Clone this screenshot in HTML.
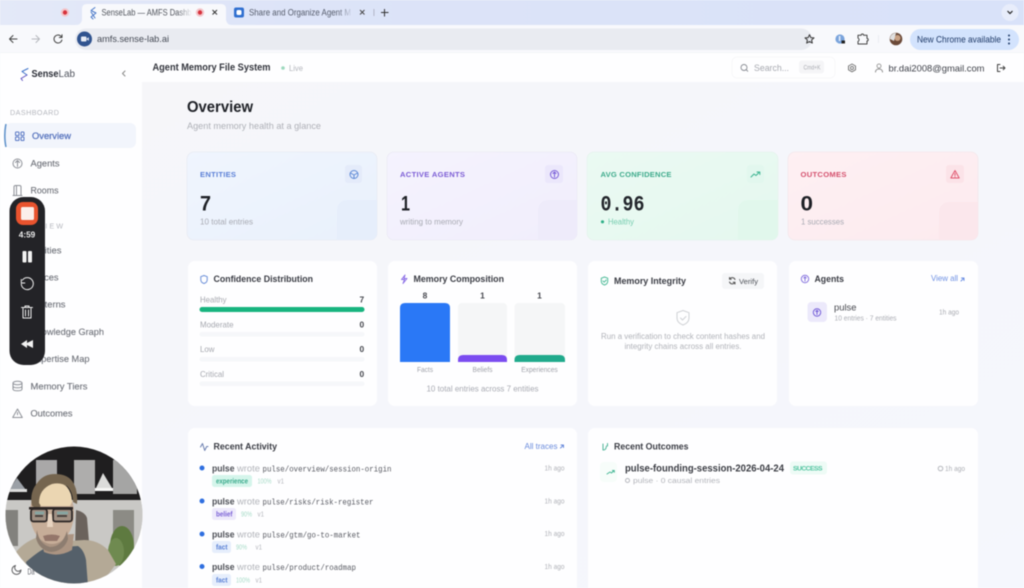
<!DOCTYPE html>
<html><head><meta charset="utf-8"><title>SenseLab — AMFS Dashboard</title>
<style>
html,body{margin:0;padding:0;width:1024px;height:588px;overflow:hidden;background:#f7f8fc}
svg{display:block;filter:blur(.45px);font-family:"Liberation Sans",sans-serif}
.m{font-family:"Liberation Mono",monospace}
.b{font-weight:700}
.i{fill:none;stroke-width:1;stroke-linecap:round;stroke-linejoin:round}
</style></head><body>
<svg width="1024" height="588" viewBox="0 0 1024 588" xmlns="http://www.w3.org/2000/svg">
<defs>
<linearGradient id="strip" x1="0" x2="1" y1="0" y2="0"><stop offset="0" stop-color="#e4e9f8"/><stop offset=".3" stop-color="#dde4f8"/><stop offset="1" stop-color="#d9e2f9"/></linearGradient>
<linearGradient id="main" x1="0" x2="1" y1="0" y2="1"><stop offset="0" stop-color="#f6f6f9"/><stop offset="1" stop-color="#f5f7fd"/></linearGradient>
<linearGradient id="c1" x1="0" x2="1" y1="0" y2="1"><stop offset="0" stop-color="#f0f5fe"/><stop offset="1" stop-color="#e9f1fc"/></linearGradient>
<linearGradient id="c2" x1="0" x2="1" y1="0" y2="1"><stop offset="0" stop-color="#f5f3fe"/><stop offset="1" stop-color="#f1eefc"/></linearGradient>
<linearGradient id="c3" x1="0" x2="1" y1="0" y2="1"><stop offset="0" stop-color="#ebfaf3"/><stop offset="1" stop-color="#e5f8ef"/></linearGradient>
<linearGradient id="c4" x1="0" x2="1" y1="0" y2="1"><stop offset="0" stop-color="#fef0f3"/><stop offset="1" stop-color="#fdebef"/></linearGradient>
<linearGradient id="fade" x1="0" x2="1"><stop offset="0" stop-color="#dde4f8" stop-opacity="0"/><stop offset="1" stop-color="#dde4f8"/></linearGradient>
<linearGradient id="fade2" x1="0" x2="1"><stop offset="0" stop-color="#f8f9fc" stop-opacity="0"/><stop offset="1" stop-color="#f8f9fc"/></linearGradient>
<clipPath id="cam"><circle cx="74" cy="515" r="68.5"/></clipPath>
<clipPath id="c1c"><rect x="187" y="152" width="190" height="88" rx="7"/></clipPath>
<clipPath id="c2c"><rect x="387" y="152" width="190" height="88" rx="7"/></clipPath>
<clipPath id="c3c"><rect x="587" y="152" width="191" height="88" rx="7"/></clipPath>
<clipPath id="c4c"><rect x="788" y="152" width="190" height="88" rx="7"/></clipPath>
</defs>

<!-- page backgrounds -->
<rect width="1024" height="588" fill="url(#main)"/>
<!-- tab strip -->
<rect width="1024" height="25" fill="url(#strip)"/>
<circle cx="65" cy="12.5" r="4.2" fill="#f3c6cb"/><circle cx="65" cy="12.5" r="2.2" fill="#d6323c"/>
<path d="M76 25q5 0 6-5V9q0-5 5-5h134q5 0 5 5v11q1 5 6 5z" fill="#f8f9fc"/>
<path class="i" d="M95 7.5l-4 3 5 2.500-5 4 2 2 M91 12l4 6" stroke="#4a78c8" stroke-width="1.800"/>
<text x="101.500" y="15.500" font-size="8.800" fill="#50545c" textLength="90" lengthAdjust="spacingAndGlyphs">SenseLab — AMFS Dashb</text>
<rect x="178" y="6" width="14" height="13" fill="url(#fade2)"/>
<circle cx="200" cy="12.500" r="4.200" fill="#f3c6cb"/><circle cx="200" cy="12.500" r="2.200" fill="#d6323c"/>
<path d="M212.500 10l4.500 4.500M217 10l-4.500 4.500" stroke="#333" stroke-width="1"/>
<rect x="234" y="7.500" width="10" height="10" rx="2" fill="#2f6fd0"/><rect x="236.500" y="10" width="5" height="5" rx="1.500" fill="#fff"/>
<text x="249" y="15.500" font-size="8.800" fill="#555b6b" textLength="102" lengthAdjust="spacingAndGlyphs">Share and Organize Agent M</text>
<rect x="338" y="6" width="15" height="13" fill="url(#fade)"/>
<path d="M360 10l4.500 4.500M364.500 10l-4.500 4.500" stroke="#444" stroke-width=".9"/>
<rect x="373.500" y="9" width=".8" height="7" fill="#aab"/>
<path d="M384.500 9v7.500M381 12.500h7.500" stroke="#333" stroke-width="1"/>
<circle cx="1010" cy="12.500" r="8.500" fill="#e8edfb"/><path d="M1007.500 11l2.500 2.500 2.500-2.500" fill="none" stroke="#222" stroke-width="1.200"/>

<!-- toolbar -->
<rect y="25" width="1024" height="28" fill="#f8f9fc"/>
<rect y="52.700" width="1024" height=".6" fill="#e9ebf1"/>
<path class="i" stroke="#444" d="M17 39h-7.500M13 35.500L9.500 39l3.500 3.500" stroke-width="1.100"/>
<path class="i" stroke="#b6b8be" d="M32 39h7.500M36 35.500l3.500 3.500-3.500 3.500" stroke-width="1.100"/>
<path class="i" stroke="#444" d="M61.500 37a4 4 0 1 0 .4 3M62 34.800V37.500h-2.700" stroke-width="1.100"/>
<rect x="75" y="28.500" width="737" height="21.500" rx="10.750" fill="#e9ebf1"/>
<circle cx="84.500" cy="39" r="7.500" fill="#30538f"/><rect x="81" y="36.500" width="5.500" height="5" rx="1" fill="#e8ecf5"/><path d="M86.800 38.500l2-1.200v3.400l-2-1.200z" fill="#e8ecf5"/>
<text x="97" y="42" font-size="9.300" fill="#454a55" textLength="72" lengthAdjust="spacingAndGlyphs">amfs.sense-lab.ai</text>
<path class="i" stroke="#333" stroke-width="1" d="M809.500 34.700l1.300 2.900 3.200.3-2.400 2.100.7 3.100-2.800-1.600-2.800 1.600.7-3.100-2.400-2.100 3.200-.3z"/>
<circle cx="840" cy="39" r="4.600" fill="#7aa4dc"/><rect x="838.800" y="36" width="1.600" height="5" fill="#e6eefa"/><rect x="841.500" y="40.500" width="3.500" height="3" fill="#222"/>
<path class="i" stroke="#444" stroke-width="1.100" d="M858 35.200h3.200a1.200 1.200 0 0 1 2.400 0H867v3.300a1.200 1.200 0 0 1 0 2.400V44h-9v-2.600a1.800 1.800 0 0 0 0-3.300z"/>
<rect x="878" y="35" width=".8" height="8" fill="#e8eaf0"/>
<circle cx="896" cy="39" r="6.300" fill="#6b4a38"/><circle cx="897.500" cy="38" r="3" fill="#c8a184"/><path d="M890 39a6 6 0 0 1 6-6l-2 8z" fill="#e0e0e0"/>
<rect x="910" y="29" width="109" height="21" rx="10.500" fill="#d3e3fd"/>
<text x="917" y="42.500" font-size="9" fill="#1f3a68" textLength="84" lengthAdjust="spacingAndGlyphs">New Chrome available</text>
<circle cx="1009" cy="35.500" r="1" fill="#1f3a68"/><circle cx="1009" cy="39.500" r="1" fill="#1f3a68"/><circle cx="1009" cy="43.500" r="1" fill="#1f3a68"/>

<!-- sidebar + header -->
<rect y="53" width="142" height="535" fill="#fefeff"/>
<rect y="53" width="1024" height="29" fill="#fefeff"/>
<path class="i" stroke="#3f74c9" stroke-width="2.400" d="M28 68.500l-6 3 5 3.500"/>
<path class="i" stroke="#5c4fbe" stroke-width="2.400" d="M27 75l-6 3.500 1.500 2"/>
<text x="31.500" y="77" font-size="10" class="b" fill="#2a2d36" textLength="27" lengthAdjust="spacingAndGlyphs">Sense</text>
<text x="58.500" y="77" font-size="10" fill="#50545e" textLength="16.500" lengthAdjust="spacingAndGlyphs">Lab</text>
<path class="i" stroke="#888" d="M125 71l-2.500 2.500 2.500 2.500" stroke-width="1"/>
<text x="152.500" y="70.500" font-size="10" class="b" fill="#33353d" textLength="118" lengthAdjust="spacingAndGlyphs">Agent Memory File System</text>
<circle cx="283" cy="68" r="1.800" fill="#9ed9be"/>
<text x="289" y="71" font-size="8" fill="#b4b6bd" textLength="14" lengthAdjust="spacingAndGlyphs">Live</text>
<rect x="732" y="57" width="103" height="21" rx="5" fill="#fefeff" stroke="#f6f6f8" stroke-width=".8"/>
<circle cx="744" cy="67.500" r="3" fill="none" stroke="#8a8d94" stroke-width=".9"/><path d="M746.200 69.700l1.800 1.800" stroke="#8a8d94" stroke-width=".9"/>
<text x="754" y="71" font-size="9" fill="#a7a9b0" textLength="35" lengthAdjust="spacingAndGlyphs">Search...</text>
<rect x="799" y="60.500" width="25" height="13" rx="3" fill="#f5f5f7"/>
<text x="803.500" y="69.500" font-size="6.300" fill="#a9abb1" textLength="17" lengthAdjust="spacingAndGlyphs">Cmd+K</text>
<path class="i" stroke="#777" stroke-width=".9" d="M852 64l3.500 2v3.800l-3.500 2-3.500-2V66z"/><circle cx="852" cy="68" r="1.500" fill="none" stroke="#777" stroke-width=".9"/>
<circle cx="879" cy="66" r="2" fill="none" stroke="#888" stroke-width=".8"/><path class="i" stroke="#888" stroke-width=".8" d="M875.500 72c0-4 7-4 7 0"/>
<text x="888.500" y="71.300" font-size="9.400" fill="#3e4149" textLength="96" lengthAdjust="spacingAndGlyphs">br.dai2008@gmail.com</text>
<path class="i" stroke="#444" stroke-width=".9" d="M1000 64.500h-2.500v7h2.500M1000 68h5M1003.200 66.300l1.800 1.700-1.800 1.700"/>

<!-- sidebar nav -->
<text x="10" y="115" font-size="7.200" fill="#b5b7be" textLength="49" lengthAdjust="spacing">DASHBOARD</text>
<rect x="5" y="123" width="131" height="25" rx="6" fill="#f2f5fc"/>
<path d="M6 124q-1.200 5-1.200 11.500T6 147" fill="none" stroke="#5b8fc9" stroke-width="1.500"/>
<g class="i" stroke="#5a78c4" stroke-width="1"><rect x="15.500" y="132" width="3.500" height="3.500" rx=".8"/><rect x="21" y="132" width="3" height="3.500" rx=".8"/><rect x="15.500" y="137" width="3.500" height="3.500" rx=".8"/><rect x="21" y="137" width="3" height="3.500" rx=".8"/></g>
<text x="32" y="139" font-size="9.600" fill="#5572bd" textLength="39" lengthAdjust="spacingAndGlyphs" stroke="#5572bd" stroke-width=".25">Overview</text>
<g fill="#6f727a" font-size="9.600" stroke="#6f727a" stroke-width=".12">
<text x="30.500" y="166.500" textLength="29" lengthAdjust="spacingAndGlyphs">Agents</text>
<text x="30.500" y="193.500" textLength="28" lengthAdjust="spacingAndGlyphs">Rooms</text>
<text x="30.500" y="253.500" textLength="31" lengthAdjust="spacingAndGlyphs">Entities</text>
<text x="30.500" y="280.500" textLength="28" lengthAdjust="spacingAndGlyphs">Traces</text>
<text x="30.500" y="307.500" textLength="35" lengthAdjust="spacingAndGlyphs">Patterns</text>
<text x="30.500" y="335" textLength="73.500" lengthAdjust="spacingAndGlyphs">Knowledge Graph</text>
<text x="30.500" y="362" textLength="59" lengthAdjust="spacingAndGlyphs">Expertise Map</text>
<text x="30.500" y="389.500" textLength="57" lengthAdjust="spacingAndGlyphs">Memory Tiers</text>
<text x="30.500" y="416.500" textLength="42" lengthAdjust="spacingAndGlyphs">Outcomes</text>
</g>
<text x="10" y="228.500" font-size="7.200" fill="#b5b7be" textLength="53" lengthAdjust="spacing">OVERVIEW</text>
<g class="i" stroke="#8e9198" stroke-width=".9">
<circle cx="17.500" cy="163.500" r="4.500"/><path d="M17.500 160.500v6M15.500 162.500l2-2 2 2"/>
<path d="M14 195.500v-8.500q0-1.500 1.500-1.500h4q1.500 0 1.500 1.500v8.500M13 195.500h9M16.500 186v9"/>
<ellipse cx="17.500" cy="383" rx="4.500" ry="1.800"/><path d="M13 383v6c0 2.400 9 2.400 9 0v-6M13 386c0 2.400 9 2.400 9 0"/>
<path d="M17.500 409l-4.800 8.500h9.600zM17.500 412.500v2.200"/>
</g>

<!-- page title -->
<text x="187" y="112" font-size="15.500" class="b" fill="#1e2026" textLength="66" lengthAdjust="spacingAndGlyphs">Overview</text>
<text x="187" y="129" font-size="9.500" fill="#aeb0b7" textLength="134" lengthAdjust="spacingAndGlyphs">Agent memory health at a glance</text>

<!-- stat cards -->
<rect x="187" y="152" width="190" height="88" rx="7" fill="url(#c1)" stroke="#e8ebf3" stroke-width=".8"/>
<g clip-path="url(#c1c)"><rect x="337" y="200" width="50" height="50" rx="10" fill="#e6eefb"/></g>
<rect x="387" y="152" width="190" height="88" rx="7" fill="url(#c2)" stroke="#ebeaf5" stroke-width=".8"/>
<g clip-path="url(#c2c)"><rect x="538" y="200" width="50" height="50" rx="10" fill="#eeebfa"/></g>
<rect x="587" y="152" width="191" height="88" rx="7" fill="url(#c3)" stroke="#e6f3ee" stroke-width=".8"/>
<g clip-path="url(#c3c)"><rect x="738" y="200" width="50" height="50" rx="10" fill="#e1f7ec"/></g>
<rect x="788" y="152" width="190" height="88" rx="7" fill="url(#c4)" stroke="#f3e8ec" stroke-width=".8"/>
<g clip-path="url(#c4c)"><rect x="939" y="202" width="50" height="50" rx="10" fill="#fbe7ec"/></g>

<rect x="345" y="165" width="17" height="18" rx="3" fill="#e4ebfa"/>
<rect x="545" y="165" width="18" height="18" rx="3" fill="#ebe7fb"/>
<rect x="747" y="165" width="17" height="18" rx="3" fill="#e2f7ee"/>
<rect x="946" y="165" width="18" height="18" rx="3" fill="#fbe3e8"/>
<circle cx="354" cy="174.500" r="4" class="i" stroke="#5d8ad6"/><path class="i" stroke="#5d8ad6" d="M350.500 173l3.500 2 3.500-2M354 175v3"/>
<circle cx="554.500" cy="174.500" r="4" class="i" stroke="#7a5fd8" stroke-width="1.100"/><path class="i" stroke="#7a5fd8" d="M554.500 172v5M553 173.500l1.500-1.500 1.500 1.500"/>
<path class="i" stroke="#3fb592" d="M751 177l3-3 2 1.500 3.500-3.500M757 172h2.800v2.500"/>
<path class="i" stroke="#e0566f" stroke-width="1.100" d="M955 170.500l-4.200 7.500h8.400zM955 173.500v2M955 176.800v.1"/>

<g font-size="7.600" class="b">
<text x="200" y="177" fill="#5a7fd6" textLength="36" lengthAdjust="spacing">ENTITIES</text>
<text x="400" y="177" fill="#7a5bd4" textLength="65" lengthAdjust="spacing">ACTIVE AGENTS</text>
<text x="600.500" y="177" fill="#3daa8b" textLength="71" lengthAdjust="spacing">AVG CONFIDENCE</text>
<text x="800.500" y="177" fill="#d4506d" textLength="46" lengthAdjust="spacing">OUTCOMES</text>
</g>
<g font-size="21" class="b" fill="#1e2026">
<text x="200" y="210.500" textLength="11" lengthAdjust="spacingAndGlyphs">7</text>
<text x="401" y="210.500" textLength="9" lengthAdjust="spacingAndGlyphs">1</text>
<text x="800.500" y="210.500" textLength="12.500" lengthAdjust="spacingAndGlyphs">0</text>
</g>
<text class="m b" x="600.500" y="210.500" font-size="22" fill="#22252b" textLength="44" lengthAdjust="spacingAndGlyphs">0.96</text>
<g font-size="8" fill="#a8aab3">
<text x="200" y="224.500" textLength="53" lengthAdjust="spacingAndGlyphs">10 total entries</text>
<text x="400" y="224.500" textLength="63" lengthAdjust="spacingAndGlyphs">writing to memory</text>
<text x="801" y="224.500" textLength="43" lengthAdjust="spacingAndGlyphs">1 successes</text>
</g>
<circle cx="602.500" cy="221.800" r="1.600" fill="#2fb088"/>
<text x="608" y="224.500" font-size="8" fill="#76cdb0" textLength="26" lengthAdjust="spacingAndGlyphs">Healthy</text>

<!-- row 2 cards -->
<g fill="#fefeff">
<rect x="188" y="261" width="189" height="145" rx="7"/>
<rect x="388" y="261" width="189" height="145" rx="7"/>
<rect x="588" y="261" width="189" height="145" rx="7"/>
<rect x="789" y="261" width="189" height="145" rx="7"/>
<rect x="188" y="428" width="389" height="170" rx="7"/>
<rect x="588" y="428" width="390" height="170" rx="7"/>
</g>

<!-- Confidence Distribution -->
<path class="i" stroke="#6b8fd8" d="M204 275.500l3.200 1.200v3c0 2-1.500 3.200-3.200 3.800-1.700-.6-3.200-1.800-3.200-3.800v-3z"/>
<text x="213.500" y="282" font-size="9.200" class="b" fill="#3a3c44" textLength="99.500" lengthAdjust="spacingAndGlyphs">Confidence Distribution</text>
<g font-size="8.400" fill="#a6a8af">
<text x="200" y="302.500" textLength="26.500" lengthAdjust="spacingAndGlyphs">Healthy</text>
<text x="200" y="327.500" textLength="33.500" lengthAdjust="spacingAndGlyphs">Moderate</text>
<text x="200" y="352" textLength="14.500" lengthAdjust="spacingAndGlyphs">Low</text>
<text x="200" y="377" textLength="24" lengthAdjust="spacingAndGlyphs">Critical</text>
</g>
<g font-size="8.400" class="b" fill="#45474e">
<text x="359.500" y="302.500">7</text><text x="359.500" y="327.500">0</text><text x="359.500" y="352">0</text><text x="359.500" y="377">0</text>
</g>
<rect x="199.500" y="307" width="165" height="5" rx="2.500" fill="#18b47f"/>
<rect x="199.500" y="332" width="165" height="4.500" rx="2.250" fill="#f6f7fa"/>
<rect x="199.500" y="357" width="165" height="4.500" rx="2.250" fill="#f6f7fa"/>
<rect x="199.500" y="381.500" width="165" height="4.500" rx="2.250" fill="#f6f7fa"/>

<!-- Memory Composition -->
<path class="i" stroke="#8b6ee6" stroke-width="1.200" d="M405 275l-3.500 4.500h3l-1.500 4 4-5h-3z"/>
<text x="413.500" y="282" font-size="9.200" class="b" fill="#3a3c44" textLength="90.500" lengthAdjust="spacingAndGlyphs">Memory Composition</text>
<g font-size="8.400" class="b" fill="#45474e" text-anchor="middle">
<text x="425" y="298.500">8</text><text x="482.500" y="298.500">1</text><text x="539.500" y="298.500">1</text>
</g>
<rect x="458" y="303" width="49" height="59" rx="4" fill="#f5f6f7"/>
<rect x="514.500" y="303" width="50.500" height="59" rx="4" fill="#f5f6f7"/>
<path d="M400 362v-54q0-5 5-5h40q5 0 5 5v54z" fill="#2a78f6"/>
<path d="M458 362v-2q0-5 5-5h39q5 0 5 5v2z" fill="#7b4cf0"/>
<path d="M514.500 362v-2q0-5 5-5h40.500q5 0 5 5v2z" fill="#20aa8c"/>
<g font-size="7" fill="#a0a2aa" text-anchor="middle">
<text x="425" y="372" textLength="16" lengthAdjust="spacingAndGlyphs">Facts</text>
<text x="482.500" y="372" textLength="20" lengthAdjust="spacingAndGlyphs">Beliefs</text>
<text x="539.500" y="372" textLength="36.500" lengthAdjust="spacingAndGlyphs">Experiences</text>
</g>
<text x="482.500" y="391.500" font-size="8" fill="#a8aab2" text-anchor="middle" textLength="112" lengthAdjust="spacingAndGlyphs">10 total entries across 7 entities</text>

<!-- Memory Integrity -->
<path class="i" stroke="#4dbb98" stroke-width="1" d="M604.500 277l3.200 1.200v3c0 2-1.500 3.200-3.200 3.800-1.700-.6-3.200-1.800-3.200-3.800v-3zM603 281l1.200 1.200 2-2.200"/>
<text x="614" y="284" font-size="9.200" class="b" fill="#3a3c44" textLength="72" lengthAdjust="spacingAndGlyphs">Memory Integrity</text>
<rect x="722" y="273" width="42" height="16" rx="3" fill="#f5f6f8"/>
<path class="i" stroke="#555" stroke-width=".8" d="M735 279.500a3 3 0 0 0-5.300-.5M729.500 282a3 3 0 0 0 5.300.5M729.500 277.500V279.300H731.300M735 284V282.300H733.200"/>
<text x="739" y="284" font-size="7.500" fill="#4f5259" textLength="19" lengthAdjust="spacingAndGlyphs">Verify</text>
<path class="i" stroke="#cfd1d5" stroke-width="1" d="M683 310.500l6 2.200v5.300c0 3.600-2.800 5.800-6 7-3.200-1.200-6-3.400-6-7v-5.300zM680.500 318l2 2 3.500-3.500"/>
<text x="683" y="339" font-size="8" fill="#b1b3b9" text-anchor="middle" textLength="164" lengthAdjust="spacingAndGlyphs">Run a verification to check content hashes and</text>
<text x="683" y="349" font-size="8" fill="#b1b3b9" text-anchor="middle" textLength="117" lengthAdjust="spacingAndGlyphs">integrity chains across all entries.</text>

<!-- Agents -->
<circle cx="805" cy="279" r="3.700" class="i" stroke="#8a78df"/><path class="i" stroke="#8a78df" stroke-width=".8" d="M805 277v4M803.800 278l1.200-1.200 1.200 1.200"/>
<text x="814.500" y="282" font-size="9.200" class="b" fill="#3a3c44" textLength="29.500" lengthAdjust="spacingAndGlyphs">Agents</text>
<text x="931" y="281" font-size="8.400" fill="#6f91e3" textLength="27" lengthAdjust="spacingAndGlyphs">View all</text>
<path class="i" stroke="#6f91e3" stroke-width=".8" d="M961 281l3-3M961.500 278H964v2.500"/>
<rect x="807.500" y="302" width="19.500" height="20" rx="4" fill="#ece9fb"/>
<circle cx="817" cy="312.500" r="3.700" class="i" stroke="#7660d8" stroke-width="1.100"/><path class="i" stroke="#7660d8" stroke-width=".8" d="M817 310.500v4M815.800 311.500l1.200-1.200 1.200 1.200"/>
<text x="834" y="310.500" font-size="9.600" fill="#45474e" textLength="22.500" lengthAdjust="spacingAndGlyphs">pulse</text>
<text x="834.500" y="320.500" font-size="7" fill="#aaacb3" textLength="62" lengthAdjust="spacingAndGlyphs">10 entries · 7 entities</text>
<text x="939" y="314.500" font-size="7.300" fill="#aaacb3" textLength="20" lengthAdjust="spacingAndGlyphs">1h ago</text>

<!-- Recent Activity -->
<path class="i" stroke="#6b7fb0" stroke-width=".9" d="M200.500 447l2-3.500 2.200 7 2-4h1.300"/>
<text x="213.500" y="449.500" font-size="9.200" class="b" fill="#3a3c44" textLength="63.500" lengthAdjust="spacingAndGlyphs">Recent Activity</text>
<text x="524.500" y="449" font-size="8.400" fill="#6a8bdc" textLength="33" lengthAdjust="spacingAndGlyphs">All traces</text>
<path class="i" stroke="#6a8bdc" stroke-width=".8" d="M560.500 448l3-3M561 445h2.500v2.500"/>

<g id="rows">
<circle cx="202" cy="468" r="2.500" fill="#2f6fe0"/>
<circle cx="202" cy="501" r="2.500" fill="#2f6fe0"/>
<circle cx="202" cy="534" r="2.500" fill="#2f6fe0"/>
<circle cx="202" cy="566.500" r="2.500" fill="#2f6fe0"/>
<g font-size="9.200" class="b" fill="#4c4e55">
<text x="212" y="471.500" textLength="22.500" lengthAdjust="spacingAndGlyphs">pulse</text>
<text x="212" y="504.500" textLength="22.500" lengthAdjust="spacingAndGlyphs">pulse</text>
<text x="212" y="537.500" textLength="22.500" lengthAdjust="spacingAndGlyphs">pulse</text>
<text x="212" y="570" textLength="22.500" lengthAdjust="spacingAndGlyphs">pulse</text>
</g>
<g font-size="9.200" fill="#b2b4ba">
<text x="237" y="471.500" textLength="23" lengthAdjust="spacingAndGlyphs">wrote</text>
<text x="237" y="504.500" textLength="23" lengthAdjust="spacingAndGlyphs">wrote</text>
<text x="237" y="537.500" textLength="23" lengthAdjust="spacingAndGlyphs">wrote</text>
<text x="237" y="570" textLength="23" lengthAdjust="spacingAndGlyphs">wrote</text>
</g>
<g class="m" font-size="8.300" fill="#585a62">
<text x="262.500" y="471.500" textLength="129" lengthAdjust="spacingAndGlyphs">pulse/overview/session-origin</text>
<text x="262.500" y="504.500" textLength="111" lengthAdjust="spacingAndGlyphs">pulse/risks/risk-register</text>
<text x="262.500" y="537.500" textLength="98" lengthAdjust="spacingAndGlyphs">pulse/gtm/go-to-market</text>
<text x="262.500" y="570" textLength="93.500" lengthAdjust="spacingAndGlyphs">pulse/product/roadmap</text>
</g>
<g font-size="7.300" fill="#b0b2b8">
<text x="544.500" y="470.500" textLength="20" lengthAdjust="spacingAndGlyphs">1h ago</text>
<text x="544.500" y="503.500" textLength="20" lengthAdjust="spacingAndGlyphs">1h ago</text>
<text x="544.500" y="536" textLength="20" lengthAdjust="spacingAndGlyphs">1h ago</text>
<text x="544.500" y="569" textLength="20" lengthAdjust="spacingAndGlyphs">1h ago</text>
</g>
<rect x="212" y="475" width="40" height="12" rx="2.500" fill="#d5f5eb"/>
<text x="216" y="483.700" font-size="7" class="b" fill="#3aaa8c" textLength="32" lengthAdjust="spacingAndGlyphs">experience</text>
<text x="257.500" y="483.700" font-size="7" fill="#a9dcc9" textLength="14" lengthAdjust="spacingAndGlyphs">100%</text>
<text x="277.500" y="483.700" font-size="7" fill="#b4b6bc" textLength="6.500" lengthAdjust="spacingAndGlyphs">v1</text>
<rect x="212" y="508" width="24" height="12" rx="2.500" fill="#eeeafb"/>
<text x="216" y="516.700" font-size="7" class="b" fill="#7b62d6" textLength="16.500" lengthAdjust="spacingAndGlyphs">belief</text>
<text x="241" y="516.700" font-size="7" fill="#a9dcc9" textLength="11" lengthAdjust="spacingAndGlyphs">90%</text>
<text x="257.500" y="516.700" font-size="7" fill="#b4b6bc" textLength="6.500" lengthAdjust="spacingAndGlyphs">v1</text>
<rect x="212" y="541" width="19" height="12" rx="2.500" fill="#e6eefc"/>
<text x="216" y="549.700" font-size="7" class="b" fill="#5b82d6" textLength="11.500" lengthAdjust="spacingAndGlyphs">fact</text>
<text x="236" y="549.700" font-size="7" fill="#a9dcc9" textLength="11" lengthAdjust="spacingAndGlyphs">90%</text>
<text x="255.500" y="549.700" font-size="7" fill="#b4b6bc" textLength="6.500" lengthAdjust="spacingAndGlyphs">v1</text>
<rect x="212" y="574" width="19" height="12" rx="2.500" fill="#e6eefc"/>
<text x="216" y="582.700" font-size="7" class="b" fill="#5b82d6" textLength="11.500" lengthAdjust="spacingAndGlyphs">fact</text>
<text x="236" y="582.700" font-size="7" fill="#a9dcc9" textLength="14" lengthAdjust="spacingAndGlyphs">100%</text>
<text x="255.500" y="582.700" font-size="7" fill="#b4b6bc" textLength="6.500" lengthAdjust="spacingAndGlyphs">v1</text>
</g>

<!-- Recent Outcomes -->
<path class="i" stroke="#4fb598" stroke-width=".9" d="M603 444v6M603 450c3 0 3-2 3.500-4M607.500 443.500v2.500"/>
<text x="614" y="449.500" font-size="9.200" class="b" fill="#3a3c44" textLength="74.500" lengthAdjust="spacingAndGlyphs">Recent Outcomes</text>
<rect x="600" y="462" width="17" height="20" rx="4" fill="#f7fdfa"/>
<path class="i" stroke="#46b796" stroke-width=".9" d="M607 474l3-2 1.500 1 2.500-2.500M612.500 470.500h1.800v1.800"/>
<text x="625" y="471.500" font-size="9.800" class="b" fill="#3a3c43" textLength="159" lengthAdjust="spacingAndGlyphs">pulse-founding-session-2026-04-24</text>
<rect x="790" y="461.500" width="37" height="13" rx="3" fill="#eefbf6"/>
<text x="793" y="470.500" font-size="6.800" class="b" fill="#52c4a0" textLength="29.500" lengthAdjust="spacing">SUCCESS</text>
<circle cx="627.500" cy="480.500" r="2" class="i" stroke="#b5b7bd" stroke-width=".7"/>
<text x="633" y="483" font-size="7" fill="#b2b4ba" textLength="87" lengthAdjust="spacingAndGlyphs">pulse · 0 causal entries</text>
<circle cx="940.500" cy="468.500" r="2.300" class="i" stroke="#b5b7bd" stroke-width=".7"/>
<text x="945" y="471" font-size="7.300" fill="#adafb5" textLength="20" lengthAdjust="spacingAndGlyphs">1h ago</text>

<!-- recorder overlay -->
<rect x="9.500" y="197" width="35.500" height="168" rx="14" fill="#232327"/>
<rect x="16" y="202" width="22" height="23" rx="7" fill="#e9532e"/>
<rect x="21" y="207" width="13" height="13" rx="1.500" fill="#fbeeea"/>
<text x="27" y="237.500" font-size="7.800" class="b" fill="#eeeeee" text-anchor="middle" textLength="16.500" lengthAdjust="spacingAndGlyphs">4:59</text>
<rect x="22.500" y="251" width="4" height="11.500" rx="1" fill="#f2f2f2"/><rect x="28" y="251" width="4" height="11.500" rx="1" fill="#f2f2f2"/>
<path class="i" stroke="#f0f0f0" stroke-width="1.100" d="M22.500 280a6 6 0 1 1-1.200 4M21.300 279.500v3.500h3.500"/>
<path class="i" stroke="#f0f0f0" stroke-width="1.100" d="M23 308.500v9.500h8v-9.500M21.500 307.500h11M25 307.500v-1.500h4v1.500M25.500 310v6M28.500 310v6"/>
<path d="M21 344l6-4v3l6-3v8l-6-3v3z" fill="#f2f2f2"/>

<!-- webcam bubble -->
<g clip-path="url(#cam)">
<rect x="0" y="440" width="150" height="150" fill="#c8c8c6"/>
<rect x="0" y="440" width="150" height="60" fill="#1f1e1f"/>
<rect x="36" y="460" width="21" height="34" fill="#a9a8a8"/>
<rect x="74" y="460" width="21" height="34" fill="#aeadac"/>
<rect x="113" y="460" width="24" height="34" fill="#a5a5a4"/>
<path d="M103 473l-7 15q7 2 16 0z" fill="#dcdcda"/>
<rect x="95" y="488" width="18" height="3" fill="#f6f6f4"/>
<path d="M17 478l-8 12q8 2 17 0z" fill="#9ba0a6"/><rect x="8" y="489" width="19" height="3" fill="#dcdcdc"/>
<rect y="500" width="150" height="90" fill="#c9c8c5"/>
<rect x="5" y="510" width="13" height="36" fill="#82817d"/>
<rect x="113" y="510" width="21" height="40" fill="#8c8b85"/>
<ellipse cx="122" cy="546" rx="12" ry="20" fill="#5e7a40"/>
<ellipse cx="116" cy="552" rx="8" ry="14" fill="#6f8a50"/>
<path d="M76 510q9 2 11 8l2 24-14 6z" fill="#6a625c"/>
<path d="M16 552q10-12 26-16l12 6 30-2q14 0 24 10l8 14-18 24H30z" fill="#b4a996"/>
<path d="M26 562q14-12 20-14l32-2q6 4 8 14l2 26H30z" fill="#55606a"/>
<path d="M40 536l4 16q14 6 28-2l2-16z" fill="#ab9482"/>
<ellipse cx="52" cy="513" rx="22" ry="31" fill="#c6ad98"/>
<path d="M32 506q-3-14 6-24 6-8 17-8 14 0 19 10 4 8 3 20l-4-2q0-10-6-16-6-2-15 0-8 4-11 12l-1 12z" fill="#75654f"/>
<path d="M39 503q0-14 13-19 10-2 15 3 5 6 5 15l-2 4H41z" fill="#ebd6b2"/>
<rect x="29" y="507" width="44" height="2.500" fill="#2c2625"/>
<rect x="31" y="509" width="16" height="12.500" rx="2.500" fill="#a08f82" stroke="#2c2726" stroke-width="1.800"/>
<rect x="53" y="509" width="19" height="12.500" rx="2.500" fill="#a08f82" stroke="#2c2726" stroke-width="1.800"/>
<path d="M35 511.500h9v3h-9zM57 511.500h11v3H57z" fill="#87a5a2"/>
<path d="M35 515h8v2h-8zM57 515h10v2H57z" fill="#4b4440"/>
<path d="M48 514l-1 13h6l-1-13z" fill="#e8d4c0"/>
<path d="M43 536q9-3 17 0l-3 5H45z" fill="#94766a"/>
<path d="M37 530q2 14 13 17 12 0 17-16l1 8q-4 12-17 13-12-2-15-14z" fill="#8d7d70"/>
</g>
<path class="i" stroke="#5d5d60" stroke-width="1" d="M21 570a4.500 4.500 0 1 1-5.500-4.500 3.500 3.500 0 0 0 5.500 4.500z"/>
<text x="27.500" y="574.500" font-size="8.500" fill="#5c5e66" textLength="7" lengthAdjust="spacingAndGlyphs">Da</text>
</svg>
</body></html>
